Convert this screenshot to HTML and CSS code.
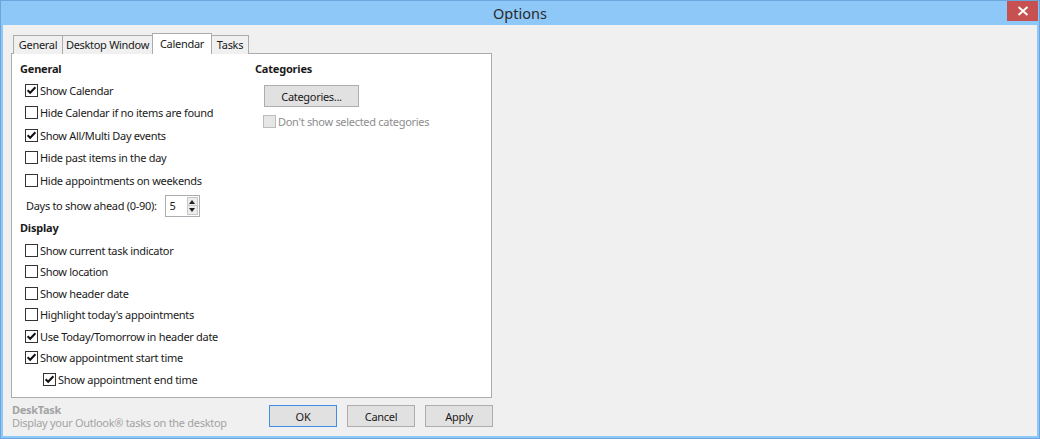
FILE: index.html
```html
<!DOCTYPE html>
<html>
<head>
<meta charset="utf-8">
<link rel="stylesheet" href="styles.css">
</head>
<body>
<div class="window">
  <div class="titlebar">
    <div></div>
    <div class="title">Options</div>
    <div class="close">
      <svg width="12" height="10" viewBox="0 0 12 10"><path d="M1.5 1 L10.5 9 M10.5 1 L1.5 9" stroke="#fff" stroke-width="2" fill="none"/></svg>
    </div>
  </div>
  <div class="client">
    <div class="tabs">
      <div class="tab w-general">General</div>
      <div class="tab w-desktop">Desktop Window</div>
      <div class="tab active w-calendar">Calendar</div>
      <div class="tab w-tasks">Tasks</div>
    </div>
    <div class="panel">
      <div class="col col-left">
        <div class="hdr">General</div>
        <div class="rows rows-a">
          <div class="cb on"><span class="box"><svg viewBox="0 0 11 11"><path d="M1.6 5.2 L4.2 7.8 L9.4 2.2" stroke="#111" stroke-width="2" fill="none"/></svg></span>Show Calendar</div>
          <div class="cb"><span class="box"></span>Hide Calendar if no items are found</div>
          <div class="cb on"><span class="box"><svg viewBox="0 0 11 11"><path d="M1.6 5.2 L4.2 7.8 L9.4 2.2" stroke="#111" stroke-width="2" fill="none"/></svg></span>Show All/Multi Day events</div>
          <div class="cb"><span class="box"></span>Hide past items in the day</div>
          <div class="cb"><span class="box"></span>Hide appointments on weekends</div>
        </div>
        <div class="days">
          <span>Days to show ahead (0-90):</span>
          <div class="spin">
            <span class="spin-val">5</span>
            <div class="spin-btns">
              <div class="spin-btn"><span class="tri-up"></span></div>
              <div class="spin-btn"><span class="tri-down"></span></div>
            </div>
          </div>
        </div>
        <div class="hdr">Display</div>
        <div class="rows rows-b">
          <div class="cb"><span class="box"></span>Show current task indicator</div>
          <div class="cb"><span class="box"></span>Show location</div>
          <div class="cb"><span class="box"></span>Show header date</div>
          <div class="cb"><span class="box"></span>Highlight today's appointments</div>
          <div class="cb on"><span class="box"><svg viewBox="0 0 11 11"><path d="M1.6 5.2 L4.2 7.8 L9.4 2.2" stroke="#111" stroke-width="2" fill="none"/></svg></span>Use Today/Tomorrow in header date</div>
          <div class="cb on"><span class="box"><svg viewBox="0 0 11 11"><path d="M1.6 5.2 L4.2 7.8 L9.4 2.2" stroke="#111" stroke-width="2" fill="none"/></svg></span>Show appointment start time</div>
          <div class="cb on nested"><span class="box"><svg viewBox="0 0 11 11"><path d="M1.6 5.2 L4.2 7.8 L9.4 2.2" stroke="#111" stroke-width="2" fill="none"/></svg></span>Show appointment end time</div>
        </div>
      </div>
      <div class="col col-right">
        <div class="hdr">Categories</div>
        <div class="btn btn-cat">Categories...</div>
        <div class="cb disabled"><span class="box"></span>Don't show selected categories</div>
      </div>
    </div>
    <div class="footer">
      <div class="brand">
        <div class="brand-name">DeskTask</div>
        <div class="brand-desc">Display your Outlook® tasks on the desktop</div>
      </div>
      <div class="buttons">
        <div class="btn btn-default">OK</div>
        <div class="btn">Cancel</div>
        <div class="btn">Apply</div>
      </div>
    </div>
  </div>
</div>
</body>
</html>
```

FILE: styles.css
```css
* { box-sizing: border-box; }
html, body { margin: 0; padding: 0; }
body {
  width: 1040px;
  height: 439px;
  overflow: hidden;
  font-family: "Noto Sans", "Open Sans", "DejaVu Sans", sans-serif;
  font-size: 11px;
  letter-spacing: -0.3px;
  color: #1a1a1a;
}
.window {
  width: 1040px;
  height: 439px;
  background: #8ec8f8;
  border: 1px solid #6aa6dc;
  display: flex;
  flex-direction: column;
}
.titlebar {
  height: 24px;
  display: grid;
  grid-template-columns: 1fr auto 1fr;
  align-items: start;
}
.title {
  font-size: 14.5px;
  letter-spacing: 0;
  line-height: 24px;
  color: #2a2a2a;
}
.close {
  justify-self: end;
  width: 31px;
  height: 20px;
  margin-right: 1px;
  background: #c75050;
  display: flex;
  align-items: center;
  justify-content: center;
}
.close svg { display: block; }
.client {
  flex: 1;
  margin: 0 2px 2px 2px;
  background: #f0f0f0;
  display: flex;
  flex-direction: column;
}
.tabs {
  display: flex;
  align-items: flex-end;
  height: 29px;
  padding-left: 10px;
  margin-bottom: -1px;
  position: relative;
  z-index: 1;
}
.tab {
  height: 19px;
  border: 1px solid #acacac;
  border-bottom: none;
  background: #f0f0f0;
  text-align: center;
  line-height: 18px;
  color: #1a1a1a;
  white-space: nowrap;
}
.tab + .tab { margin-left: -1px; }
.tab.active {
  height: 21px;
  background: #fff;
  line-height: 19px;
  position: relative;
  z-index: 2;
}
.w-general { width: 50px; }
.w-desktop { width: 91px; }
.w-calendar { width: 60px; }
.w-tasks { width: 38px; }
.panel {
  margin-left: 8px;
  width: 481px;
  height: 345px;
  background: #fff;
  border: 1px solid #acacac;
  display: grid;
  grid-template-columns: 235px 1fr;
  padding: 7px 0 0 8px;
}
.hdr {
  font-weight: bold;
  height: 16px;
  line-height: 16px;
  letter-spacing: -0.2px;
}
.rows-a { margin-top: 1.75px; }
.rows-a .cb { height: 22.5px; }
.rows-b { margin-top: 3px; }
.rows-b .cb { height: 21.5px; }
.cb {
  display: flex;
  align-items: center;
  padding-left: 5px;
  white-space: nowrap;
}
.cb.nested { padding-left: 23px; }
.box {
  width: 13px;
  height: 13px;
  border: 1px solid #333;
  background: #fff;
  margin-right: 2px;
  display: flex;
  align-items: center;
  justify-content: center;
  flex: none;
}
.box svg { width: 11px; height: 11px; display: block; }
.days {
  height: 29px;
  display: flex;
  align-items: center;
  padding-left: 6px;
}
.spin {
  margin-left: 8px;
  width: 35px;
  height: 22px;
  border: 1px solid #abadb3;
  background: #fff;
  display: flex;
  align-items: stretch;
}
.spin-val {
  flex: 1;
  padding-left: 4px;
  line-height: 20px;
}
.spin-btns {
  width: 12px;
  display: flex;
  flex-direction: column;
  padding: 1px 1px 1px 0;
}
.spin-btn {
  flex: 1;
  background: #ececec;
  border: 1px solid #c9c9c9;
  display: flex;
  align-items: center;
  justify-content: center;
}
.spin-btn + .spin-btn { border-top: none; }
.tri-up {
  width: 0; height: 0;
  border-left: 3px solid transparent;
  border-right: 3px solid transparent;
  border-bottom: 4px solid #222;
}
.tri-down {
  width: 0; height: 0;
  border-left: 3px solid transparent;
  border-right: 3px solid transparent;
  border-top: 4px solid #222;
}
.col-right {
  display: flex;
  flex-direction: column;
  align-items: flex-start;
}
.btn {
  width: 68px;
  height: 22px;
  background: #e1e1e1;
  border: 1px solid #adadad;
  display: flex;
  align-items: center;
  justify-content: center;
  color: #1a1a1a;
}
.btn-cat {
  width: 95px;
  margin-top: 8px;
  margin-left: 9px;
}
.cb.disabled {
  height: 22px;
  margin-top: 3px;
  padding-left: 8px;
  color: #8d8d8d;
}
.cb.disabled .box {
  border-color: #bcbcbc;
  background: #e6e6e6;
}
.footer {
  display: flex;
  justify-content: space-between;
  align-items: flex-start;
  width: 490px;
  padding-left: 9px;
}
.brand {
  margin-top: 5px;
  color: #a3a3a3;
  line-height: 13px;
}
.brand-name { font-weight: bold; }
.buttons {
  display: flex;
  gap: 10px;
  margin-top: 7px;
}
.btn-default { border-color: #3c8fe3; }
```
